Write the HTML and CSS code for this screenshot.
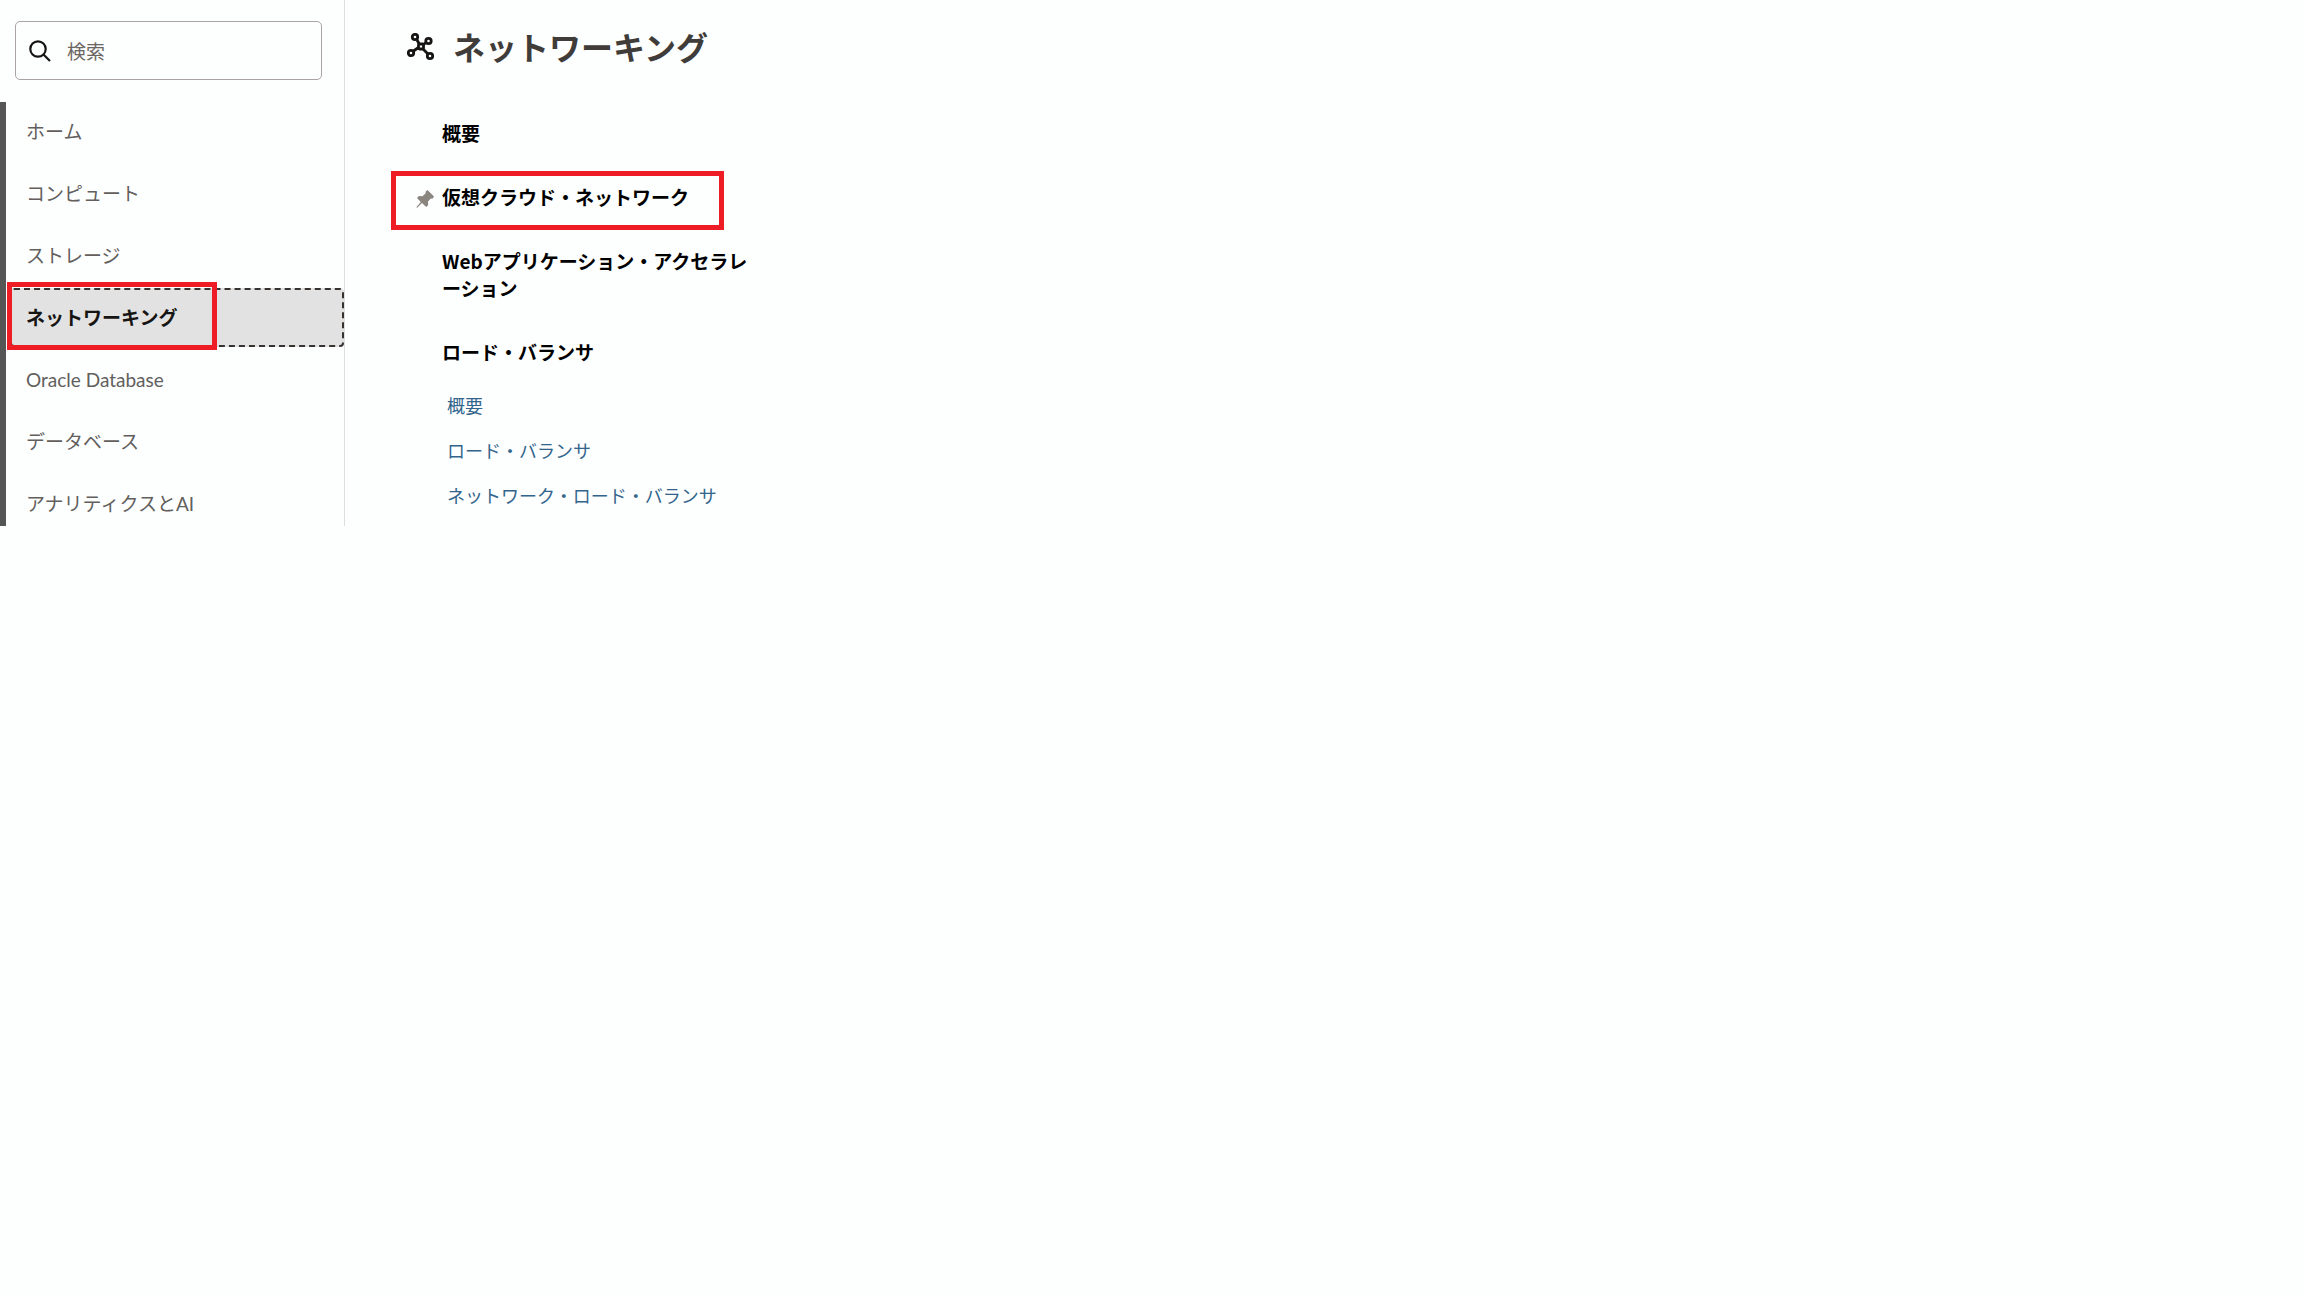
FILE: index.html
```html
<!DOCTYPE html>
<html lang="ja">
<head>
<meta charset="utf-8">
<title>ネットワーキング</title>
<link rel="stylesheet" href="styles.css">
</head>
<body>
<div class="layout">
  <aside class="sidebar">
    <label class="search">
      <svg class="search-icon" viewBox="0 0 22 22" aria-hidden="true"><circle cx="9" cy="9" r="7.7"/><path d="M14.5 14.5L21 21"/></svg>
      <input class="search-input" type="search" placeholder="検索" aria-label="検索">
    </label>
    <nav class="menu" aria-label="サービス">
      <ul class="menu-list">
        <li><a class="menu-link" href="#">ホーム</a></li>
        <li><a class="menu-link" href="#">コンピュート</a></li>
        <li><a class="menu-link" href="#">ストレージ</a></li>
        <li class="current"><a class="menu-link selected" href="#" aria-current="page">ネットワーキング</a><span class="marker marker-menu"></span></li>
        <li><a class="menu-link" href="#">Oracle Database</a></li>
        <li><a class="menu-link" href="#">データベース</a></li>
        <li><a class="menu-link last" href="#">アナリティクスとAI</a></li>
      </ul>
    </nav>
  </aside>
  <main class="content">
    <header class="heading">
      <svg class="network-icon" viewBox="0 0 28 28" aria-hidden="true"><path d="M10 7l2 3.500M19 9.500l-3 2.500M6.500 18l5-3.500M16 16l5.500 5.500"/><circle cx="8" cy="4" r="2.700"/><circle cx="21.500" cy="8" r="2.700"/><circle cx="4" cy="20" r="2.700"/><circle cx="23" cy="23" r="2.700"/><rect x="11.500" y="11" width="5" height="5" rx="1"/></svg>
      <h1 class="title">ネットワーキング</h1>
    </header>
    <div class="services">
      <a class="service" href="#">概要</a>
      <div class="pinned">
        <svg class="pin-icon" viewBox="0 0 18 18" aria-hidden="true"><path d="M11.500 0L18 6.500l-1.500 2.200-1.700-.2-2.900 3.200.3 3.400-2 2L6 13l-4.800 4.800-.9-.5L4.800 12 1 8l2-2 3.500.2 3.200-2.900-.2-1.500z"/></svg>
        <a class="service" href="#">仮想クラウド・ネットワーク</a>
        <span class="marker marker-service"></span>
      </div>
      <a class="service" href="#">Webアプリケーション・アクセラレーション</a>
      <section class="group">
        <a class="service" href="#">ロード・バランサ</a>
        <ul class="sub-list">
          <li><a class="sub-link" href="#">概要</a></li>
          <li><a class="sub-link" href="#">ロード・バランサ</a></li>
          <li><a class="sub-link" href="#">ネットワーク・ロード・バランサ</a></li>
        </ul>
      </section>
    </div>
  </main>
</div>
</body>
</html>
```
FILE: styles.css
```css
* { box-sizing: border-box; }
body {
  margin: 0;
  background: #fdfefe;
  font-family: "Noto Sans CJK JP", sans-serif;
  font-size: 19px;
  line-height: 27px;
}
ul { margin: 0; padding: 0; list-style: none; }
a { text-decoration: none; }
.layout { display: flex; align-items: stretch; }

.sidebar {
  flex: 0 0 345px;
  border-right: 1px solid #dedede;
  padding-top: 21px;
}
.search {
  display: flex;
  align-items: center;
  gap: 16px;
  margin: 0 22px 22px 15px;
  padding: 14px 13px;
  border: 1px solid #aaa5a2;
  border-radius: 5px;
}
.search-icon {
  flex: none;
  width: 22px;
  height: 22px;
  fill: none;
  stroke: #161513;
  stroke-width: 2.2;
}
.search-input {
  flex: 1;
  min-width: 0;
  height: 29px;
  border: 0;
  padding: 0;
  background: none;
  font: inherit;
  color: #161513;
  outline: none;
}
.search-input::placeholder { color: #6b6662; opacity: 1; }

.menu {
  border-left: 6px solid #555;
  font-family: Lato, "Noto Sans CJK JP", sans-serif;
}
.menu-list { display: flex; flex-direction: column; gap: 3px; }
.menu-link {
  display: block;
  margin-left: 4px;
  padding: 14px;
  border: 2px solid transparent;
  color: #625f5d;
}
.menu-link.selected {
  background: #e2e2e2;
  border: 2px dashed #36322f;
  border-radius: 4px;
  color: #161513;
  font-weight: 700;
}
.menu-link.last { padding-bottom: 7px; }
.current, .pinned { position: relative; }

.marker {
  position: absolute;
  border: 5px solid #ee1c25;
  pointer-events: none;
}
.marker-menu { left: 1px; top: -6px; width: 210px; height: 68px; }
.marker-service { left: -51px; top: -12px; width: 333px; height: 59px; }

.content { flex: 1; padding: 23px 24px 0 62px; }
.heading { display: flex; align-items: center; gap: 18px; margin-bottom: 50px; }
.network-icon {
  width: 28px;
  height: 28px;
  margin-top: 2px;
  fill: none;
  stroke: #161513;
  stroke-width: 2.8;
}
.title { margin: 0; font-size: 32px; line-height: 46px; color: #3f3c3a; }

.services {
  display: flex;
  flex-direction: column;
  gap: 37px;
  max-width: 345px;
  padding-left: 35px;
}
.service { color: #000; font-weight: 700; line-break: loose; }
.pinned { display: flex; }
.pin-icon {
  flex: none;
  width: 18px;
  height: 18px;
  margin: 7px 8px 0 -26px;
  fill: #8b8580;
}
.sub-list {
  display: flex;
  flex-direction: column;
  gap: 18px;
  padding: 27px 0 0 5px;
}
.sub-list li { display: flex; }
.sub-link { color: #33658c; font-size: 18px; white-space: nowrap; }
```
